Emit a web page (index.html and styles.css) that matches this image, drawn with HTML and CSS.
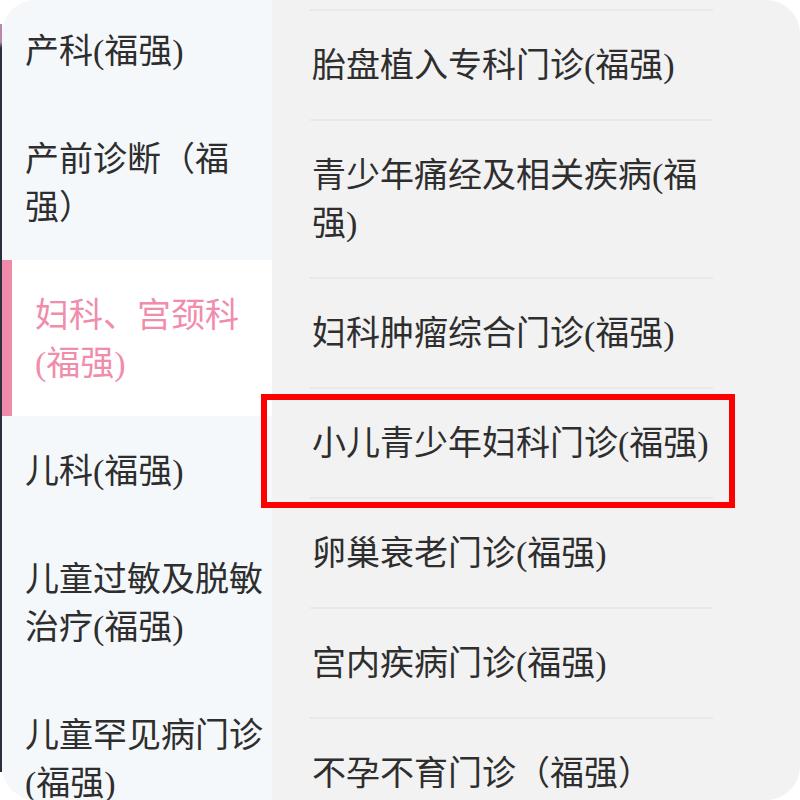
FILE: index.html
```html
<!DOCTYPE html>
<html lang="zh-CN">
<head>
<meta charset="utf-8">
<title>科室选择</title>
<link rel="stylesheet" href="styles.css">
</head>
<body>
<div class="screen">
  <div class="edge"></div>
  <div class="card">
    <ul class="dept-list">
      <li class="dept first">产科(福强)</li>
      <li class="dept">产前诊断（福强）</li>
      <li class="dept active">妇科、宫颈科(福强)</li>
      <li class="dept">儿科(福强)</li>
      <li class="dept">儿童过敏及脱敏治疗(福强)</li>
      <li class="dept">儿童罕见病门诊(福强)</li>
    </ul>
    <div class="clinic-pane">
      <ul class="clinic-list">
        <li class="clinic">胎盘植入专科门诊(福强)</li>
        <li class="clinic">青少年痛经及相关疾病(福强)</li>
        <li class="clinic">妇科肿瘤综合门诊(福强)</li>
        <li class="clinic">小儿青少年妇科门诊(福强)</li>
        <li class="clinic">卵巢衰老门诊(福强)</li>
        <li class="clinic">宫内疾病门诊(福强)</li>
        <li class="clinic">不孕不育门诊（福强）</li>
      </ul>
    </div>
  </div>
  <div class="highlight"></div>
</div>
</body>
</html>
```
FILE: styles.css
```css
html, body {
  margin: 0;
  padding: 0;
  background: #ffffff;
}

.screen {
  position: relative;
  display: flex;
  width: 800px;
  height: 800px;
  overflow: hidden;
  font-family: "Liberation Serif", "Noto Sans CJK SC", serif;
  font-size: 34px;
  line-height: 48px;
  color: #2e2e2e;
}

.edge {
  width: 2px;
  margin: 24px 0 28px;
  background: linear-gradient(to bottom, #b58aa6 0, #b58aa6 18px, #2b2e3b 24px, #2b2e3b 100%);
}

.card {
  flex: 1;
  display: grid;
  grid-template-columns: 270px 1fr;
  border-radius: 34px;
  overflow: hidden;
  background: #f2f2f2;
}

.dept-list {
  list-style: none;
  margin: 0;
  padding: 0;
  background: #f5f8fb;
}

.dept {
  padding: 32px 6px 28px 23px;
}

.dept.first {
  margin-top: -4px;
}

.dept.active {
  background: #ffffff;
  border-left: 10px solid #ef8aa8;
  color: #f08dab;
}

.clinic-pane {
  padding-left: 38px;
}

.clinic-list {
  list-style: none;
  margin: 0;
  padding: 9px 0 0;
  width: 403px;
}

.clinic {
  border-top: 2px solid #e9e9e9;
  padding: 31px 0 29px 2px;
}

.highlight {
  position: absolute;
  left: 261px;
  top: 394px;
  width: 462px;
  height: 102px;
  border: 6px solid #ff0000;
}
```
